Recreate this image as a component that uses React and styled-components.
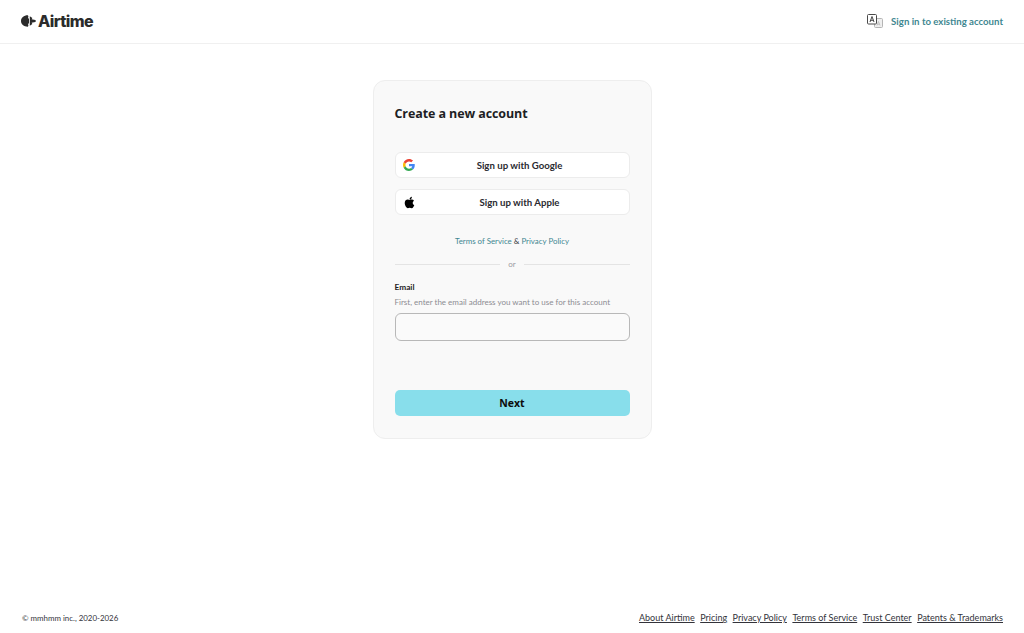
import React from "react";
import styled, { createGlobalStyle } from "styled-components";
import { FaApple } from "react-icons/fa";

const GlobalStyle = createGlobalStyle`
    html, body {
        margin: 0;
        padding: 0;
        background: #fff;
        font-family: "Open Sans", "Noto Sans", sans-serif;
    }
    * {
        box-sizing: border-box;
    }
`;

const Page = styled.div`
    display: flex;
    flex-direction: column;
    height: 633px;
    overflow: hidden;
`;

const Header = styled.header`
    display: flex;
    justify-content: space-between;
    align-items: center;
    height: 44px;
    padding: 0 21px 2px 21px;
    border-bottom: 1px solid #f0f0f0;
`;

const Logo = styled.div`
    display: flex;
    align-items: center;
    gap: 2px;
    font-family: "Inter", sans-serif;
    font-size: 16px;
    font-weight: 800;
    letter-spacing: -0.55px;
    color: #2b2b2b;
`;

const HeaderLinks = styled.div`
    display: flex;
    align-items: center;
    gap: 8px;
`;

const SignInLink = styled.a`
    font-family: "Lato", sans-serif;
    font-size: 9.65px;
    font-weight: 700;
    color: #3f8791;
`;

const Main = styled.main`
    flex: 1;
    display: flex;
    justify-content: center;
    align-items: flex-start;
    padding-top: 36px;
`;

const Card = styled.section`
    display: flex;
    flex-direction: column;
    width: 279px;
    height: 359px;
    padding: 0 21px;
    background: #f9f9f9;
    border: 1px solid #eeeeee;
    border-radius: 12px;
`;

const Title = styled.h1`
    margin: 23px 0 28px;
    font-size: 12.5px;
    line-height: 20px;
    font-weight: 700;
    letter-spacing: -0.1px;
    color: #1e1e24;
`;

const SocialButton = styled.button`
    position: relative;
    display: flex;
    align-items: center;
    justify-content: center;
    height: 26px;
    margin-bottom: 11px;
    padding-left: 21px;
    background: #fff;
    border: 1px solid #ececec;
    border-radius: 6px;
    font-family: "Lato", sans-serif;
    font-size: 9.65px;
    font-weight: 700;
    color: #2a2a30;
`;

const SocialIcon = styled.span`
    position: absolute;
    left: 7px;
    top: 6px;
    display: flex;
    color: #000;
`;

const Legal = styled.div`
    margin-top: 8px;
    height: 14px;
    line-height: 14px;
    font-family: "Lato", sans-serif;
    font-size: 7.9px;
    text-align: center;
    color: #33333a;
`;

const LegalLink = styled.a`
    color: #3f8791;
`;

const Divider = styled.div`
    display: flex;
    align-items: center;
    gap: 8px;
    margin-top: 9px;
    height: 14px;
    font-family: "Lato", sans-serif;
    font-size: 8px;
    color: #9a9aa0;

    &::before,
    &::after {
        content: "";
        flex: 1;
        height: 1px;
        background: #e4e4e4;
    }
`;

const Label = styled.label`
    margin-top: 9px;
    height: 14px;
    line-height: 14px;
    font-family: "Lato", sans-serif;
    font-size: 8.3px;
    font-weight: 700;
    color: #1e1e24;
`;

const Hint = styled.div`
    margin-top: 2px;
    height: 12px;
    line-height: 12px;
    font-family: "Lato", sans-serif;
    font-size: 8px;
    white-space: nowrap;
    color: #8c8c92;
`;

const EmailInput = styled.input`
    display: block;
    height: 28px;
    margin-top: 5px;
    background: #fafafa;
    border: 1px solid #b8b8b8;
    border-radius: 6px;
`;

const NextButton = styled.button`
    height: 26px;
    margin-top: 49px;
    background: #88deeb;
    border: none;
    border-radius: 5px;
    font-family: inherit;
    font-size: 10.5px;
    font-weight: 700;
    color: #0c0c0c;
`;

const Footer = styled.footer`
    display: flex;
    justify-content: space-between;
    align-items: baseline;
    height: 30px;
    padding: 9px 21px 0 22px;
    font-family: "Lato", sans-serif;
    font-size: 7.9px;
    color: #33333a;
`;

const FooterLinks = styled.nav`
    display: flex;
    gap: 5.5px;
`;

const FooterLink = styled.a`
    font-size: 9px;
    color: #33333a;
    text-decoration: underline;
`;

const LogoMark = () => (
    <svg width="15" height="12" viewBox="0 0 15 12" fill="#2b2b2b">
        <path d="M6.800 0.300C2.800 0.300 0 2.800 0 6s2.800 5.700 6.800 5.700c.4 0 .6-1.300.6-1.800l-.5-1 1.100-.6V3.700L6.900 3.100l.5-1c0-.5-.2-1.800-.6-1.800z" />
        <path d="M8.800 1.300l2.600 1.600-.8 1.300 3.700.8c.6.100.6 1.900 0 2l-3.700.8.800 1.300-2.600 1.600z" />
    </svg>
);

const TranslateIcon = () => (
    <svg width="16" height="14" viewBox="0 0 16 14" fill="none">
        <rect x="7.500" y="4.500" width="8" height="9" rx="1" fill="#efefef" stroke="#b5b5b5" />
        <path d="M10 11.500l1.500-4 1.500 4M10.500 10.300h2" stroke="#b5b5b5" strokeWidth="0.7" />
        <rect x="0.500" y="0.500" width="9" height="9.500" rx="1" fill="#fff" stroke="#4a4a4a" />
        <path d="M3 8l2-5.500L7 8M3.700 6.300h2.600" stroke="#333" strokeWidth="0.9" />
    </svg>
);

const GoogleIcon = () => (
    <svg width="12" height="12" viewBox="0 0 48 48">
        <path fill="#EA4335" d="M24 9.500c3.500 0 6.700 1.200 9.200 3.600l6.900-6.900C35.900 2.400 30.500 0 24 0 14.600 0 6.500 5.400 2.600 13.200l8 6.200C12.500 13.700 17.800 9.500 24 9.500z" />
        <path fill="#4285F4" d="M47 24.500c0-1.600-.1-3.100-.4-4.500H24v9h13c-.6 3-2.300 5.500-4.800 7.200l7.700 6C44.400 37.900 47 31.800 47 24.500z" />
        <path fill="#FBBC05" d="M10.600 28.600c-.5-1.400-.8-3-.8-4.600s.3-3.200.8-4.600l-8-6.200C.9 16.500 0 20.100 0 24s.9 7.500 2.600 10.800l8-6.200z" />
        <path fill="#34A853" d="M24 48c6.500 0 11.900-2.100 15.900-5.800l-7.700-6c-2.200 1.400-4.900 2.300-8.200 2.300-6.200 0-11.500-4.200-13.400-9.900l-8 6.200C6.500 42.600 14.600 48 24 48z" />
    </svg>
);

const footerLinks = ["About Airtime", "Pricing", "Privacy Policy", "Terms of Service", "Trust Center", "Patents & Trademarks"];

const App = () => {
    return (
        <Page>
            <GlobalStyle />
            <Header>
                <Logo>
                    <LogoMark />
                    Airtime
                </Logo>
                <HeaderLinks>
                    <TranslateIcon />
                    <SignInLink>Sign in to existing account</SignInLink>
                </HeaderLinks>
            </Header>
            <Main>
                <Card>
                    <Title>Create a new account</Title>
                    <SocialButton>
                        <SocialIcon><GoogleIcon /></SocialIcon>
                        Sign up with Google
                    </SocialButton>
                    <SocialButton>
                        <SocialIcon><FaApple size={13} /></SocialIcon>
                        Sign up with Apple
                    </SocialButton>
                    <Legal>
                        <LegalLink>Terms of Service</LegalLink> & <LegalLink>Privacy Policy</LegalLink>
                    </Legal>
                    <Divider>or</Divider>
                    <Label>Email</Label>
                    <Hint>First, enter the email address you want to use for this account</Hint>
                    <EmailInput />
                    <NextButton>Next</NextButton>
                </Card>
            </Main>
            <Footer>
                <span>© mmhmm inc., 2020-2026</span>
                <FooterLinks>
                    {footerLinks.map((link) => (
                        <FooterLink key={link}>{link}</FooterLink>
                    ))}
                </FooterLinks>
            </Footer>
        </Page>
    );
};

export default App;
